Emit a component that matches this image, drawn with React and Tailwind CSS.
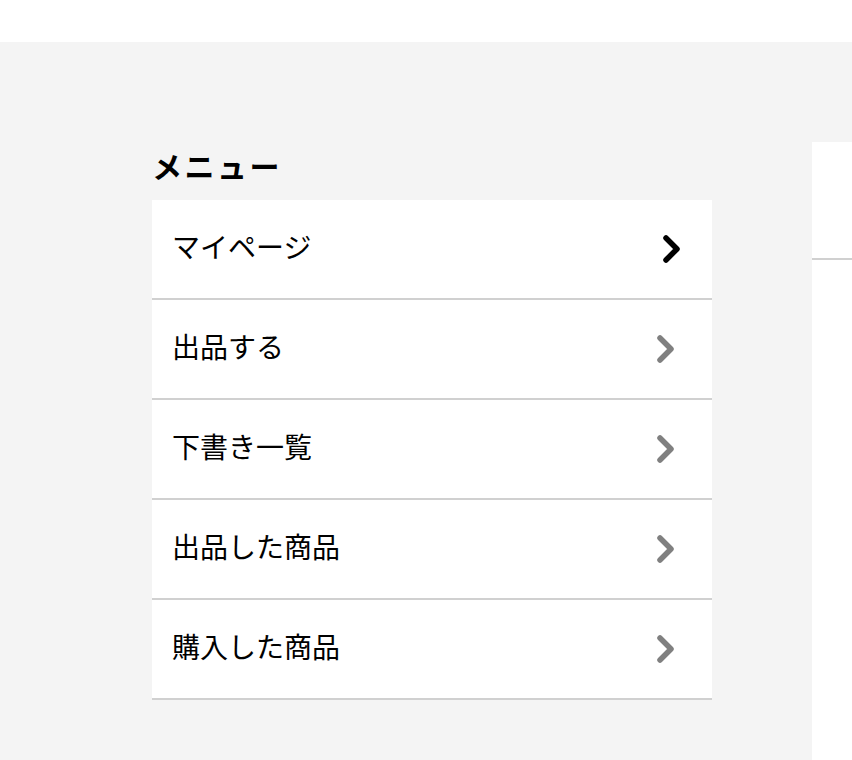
import React from "react";

const items = ["マイページ", "出品する", "下書き一覧", "出品した商品", "購入した商品"];

function Chevron({ active }) {
  return (
    <svg width="24" height="34" viewBox="0 0 24 34" className={active ? "text-black" : "text-[#808080]"}>
      <polyline points="5,6 16,17 5,28" fill="none" stroke="currentColor" strokeWidth="5.5" strokeLinecap="round" strokeLinejoin="round" />
    </svg>
  );
}

export default function App() {
  return (
    <div className="min-h-[760px] bg-[#f4f4f4] overflow-hidden" style={{ fontFamily: '"Noto Sans CJK JP", "Noto Sans", sans-serif' }}>
      <div className="h-[42px] bg-white" />
      <div className="flex gap-[100px] pl-[152px] pt-[100px]">
        <div className="w-[560px] shrink-0">
          <h2 className="mt-[8px] mb-[20px] h-[30px] text-[30px] leading-[30px] font-bold text-black tracking-[2.5px]">メニュー</h2>
          <ul className="bg-white">
            {items.map((t, i) => (
              <li key={t} className="h-[100px] border-b-2 border-[#d0d0d0] flex items-center justify-between pl-[20px] pr-[33px]">
                <span className="text-[28px] leading-none text-black -mt-[6px]">{t}</span>
                <span className={i === 0 ? "translate-x-[6px]" : ""}>
                  <Chevron active={i === 0} />
                </span>
              </li>
            ))}
          </ul>
        </div>
        <div className="flex-1 bg-white min-h-[618px]">
          <div className="h-[118px] border-b-2 border-[#d0d0d0]" />
        </div>
      </div>
    </div>
  );
}
